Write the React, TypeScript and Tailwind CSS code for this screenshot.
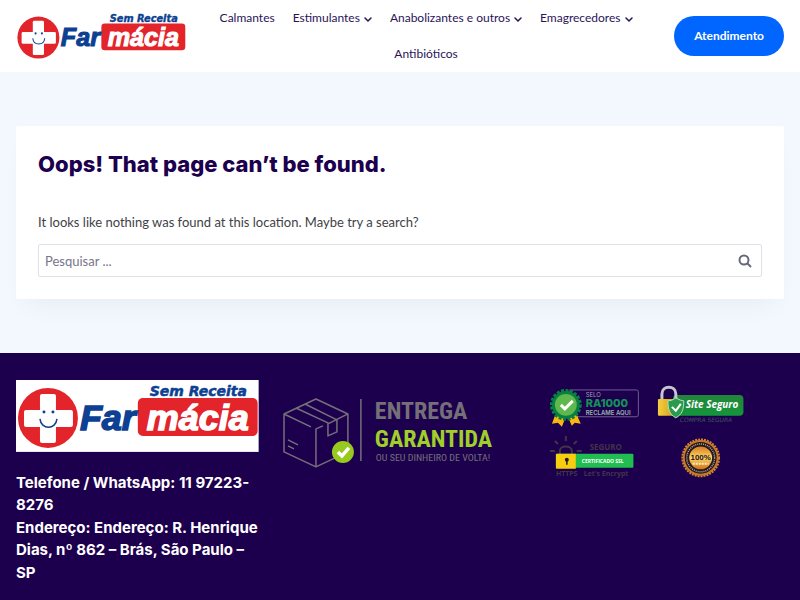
import React from "react";

function Logo({ className }: { className: string }) {
  return (
    <svg viewBox="0 0 243 72" className={className} role="img" aria-label="Farmácia Sem Receita">
      <rect width="243" height="72" fill="#fff" />
      <circle cx="32" cy="38" r="30" fill="#e3242b" />
      <rect x="24" y="14" width="16" height="49" rx="2" fill="#fff" />
      <rect x="8" y="30" width="49" height="17" rx="2" fill="#fff" />
      <circle cx="28" cy="32" r="1.5" fill="#0d3f92" />
      <circle cx="37" cy="32" r="1.5" fill="#0d3f92" />
      <path d="M24 39C25 50 40 50 41 39" fill="none" stroke="#0d3f92" strokeWidth="1.5" />
      <rect x="122" y="18" width="120" height="38" rx="5" fill="#e3242b" />
      <g fontFamily="Liberation Sans, Arial, sans-serif" fontWeight="700" fontStyle="italic" fontSize="36">
        <text x="64" y="50" fill="#0d3f92" stroke="#0d3f92" strokeWidth="1.5">Far</text>
        <text x="131" y="50" fill="#fff" stroke="#fff" strokeWidth="1.5">mácia</text>
      </g>
      <text x="134" y="16" fill="#0d3f92" stroke="#0d3f92" strokeWidth="0.5" fontFamily="DejaVu Sans, sans-serif" fontWeight="700" fontStyle="italic" fontSize="14">Sem Receita</text>
    </svg>
  );
}

function Delivery() {
  return (
    <svg viewBox="0 0 243 108" className="w-full" role="img" aria-label="Entrega garantida">
      <g fill="none" stroke="#757078" strokeWidth="1.5" strokeLinejoin="round">
        <path d="M32 47L5 34V72L37 87L69 72V34L37 19L5 34M37 87V49L44 46M69 34L49 44M17 28L49 43V56L58 52V40L26 24M9 60L19 65M9 66L15 69" />
        <path d="M82 19V81" />
      </g>
      <circle cx="64" cy="72" r="11" fill="#98c91e" />
      <path d="M59 72L63 76L70 68" fill="none" stroke="#fff" strokeWidth="3.5" />
      <g fontFamily="Liberation Sans Narrow, Roboto Condensed, Liberation Sans, sans-serif">
        <text x="96" y="39" fontSize="24" fontWeight="700" fill="#757078">ENTREGA</text>
        <text x="96" y="67" fontSize="24" fontWeight="700" fill="#a0cf29">GARANTIDA</text>
        <text x="97" y="81" fontSize="10" fill="#757078">OU SEU DINHEIRO DE VOLTA!</text>
      </g>
    </svg>
  );
}

function SeloRA() {
  return (
    <svg viewBox="0 0 108 54" className="w-full" role="img" aria-label="Selo RA1000">
      <rect x="28" y="10" width="70" height="27" rx="2" fill="none" stroke="#6f5c96" />
      <path d="M14 36L11 44L17 43L21 47L25 37ZM27 37L31 46L34 43L40 44L36 35Z" fill="#f9b810" />
      <circle cx="25" cy="25" r="14" fill="#087f43" />
      <circle cx="25" cy="25" r="14.5" fill="none" stroke="#087f43" strokeWidth="3" strokeDasharray="3 1.5" />
      <circle cx="25" cy="25" r="11" fill="#5fb84c" />
      <path d="M20 25L24 29L32 21" fill="none" stroke="#fff" strokeWidth="3" />
      <g fontFamily="Inter, sans-serif">
        <text x="45" y="17" fontSize="6" fill="#a99cbd">SELO</text>
        <text x="45" y="27" fontSize="11" fontWeight="800" fill="#16905a">RA1000</text>
        <text x="45" y="35" fontSize="6" fontWeight="600" fill="#9db0ad">RECLAME AQUI</text>
      </g>
    </svg>
  );
}

function SiteSeguro() {
  return (
    <svg viewBox="0 0 108 54" className="w-full" role="img" aria-label="Site Seguro">
      <defs>
        <linearGradient id="green" x1="0" y1="0" x2="0" y2="1">
          <stop stopColor="#23843c" />
          <stop offset="1" stopColor="#14963b" />
        </linearGradient>
        <linearGradient id="gold">
          <stop stopColor="#f5cf3f" />
          <stop offset="1" stopColor="#c98f12" />
        </linearGradient>
      </defs>
      <rect x="24" y="15" width="71" height="21" rx="4" fill="url(#green)" />
      <path d="M13 20V14C13 5 27 5 27 14V20" fill="none" stroke="#c6c5d1" strokeWidth="3" />
      <rect x="9" y="19" width="21" height="17" rx="1" fill="url(#gold)" />
      <path d="M27 18Q32 21 35 21C35 30 33 35 27 38C21 35 19 30 19 21Q23 21 27 18Z" fill="#2a9b4d" stroke="#b9dec0" />
      <path d="M23 27L27 31L32 24" fill="none" stroke="#fff" strokeWidth="2" />
      <text x="37" y="28" fill="#fff" fontFamily="Open Sans, sans-serif" fontSize="10" fontWeight="700" fontStyle="italic">Site Seguro</text>
      <text x="31" y="42" fill="#41515f" fontFamily="DejaVu Sans, sans-serif" fontSize="6" fontStyle="italic">COMPRA SEGURA</text>
    </svg>
  );
}

function CertificadoSSL() {
  return (
    <svg viewBox="0 0 108 54" className="w-full" role="img" aria-label="Certificado SSL">
      <g fill="none" stroke="#443448" strokeWidth="2">
        <path d="M19 23V17C19 11 31 11 31 17V23M25 2V7M14 7L17 10M36 7L33 10M9 17H14M36 17H41" />
      </g>
      <g fontFamily="Open Sans, sans-serif" fill="#42334b" fontWeight="700">
        <text x="49" y="16" fontSize="8">SEGURO</text>
        <text x="15" y="42" fontSize="7">HTTPS</text>
        <text x="43" y="42" fontSize="7">Let's Encrypt</text>
      </g>
      <rect x="15" y="20" width="78" height="14" rx="1" fill="#20bd51" />
      <path d="M16 20H35V35H16Q15 35 15 34V21Q15 20 16 20Z" fill="#f6ce0d" />
      <circle cx="26" cy="26" r="2" fill="#221936" />
      <path d="M26 26V31" stroke="#221936" strokeWidth="1.5" />
      <text x="41" y="29" fill="#fff" fontFamily="Open Sans, sans-serif" fontSize="5" fontWeight="700">CERTIFICADO SSL</text>
    </svg>
  );
}

function Quality() {
  return (
    <svg viewBox="0 0 108 54" className="w-full" role="img" aria-label="Qualidade 100%">
      <defs>
        <linearGradient id="seal" x1="0" y1="0" x2="0" y2="1">
          <stop stopColor="#d47d20" />
          <stop offset=".5" stopColor="#ffd56a" />
          <stop offset="1" stopColor="#cb721b" />
        </linearGradient>
      </defs>
      <circle cx="52" cy="24" r="18" fill="#c87924" />
      <circle cx="52" cy="24" r="18.5" fill="none" stroke="#ce8434" strokeWidth="2" strokeDasharray="2 1" />
      <circle cx="52" cy="24" r="16" fill="#24181d" />
      <circle cx="52" cy="24" r="14" fill="none" stroke="#bcafa5" strokeWidth="1.5" strokeDasharray="1 1" />
      <circle cx="52" cy="24" r="11.5" fill="url(#seal)" />
      <text x="52" y="26" textAnchor="middle" fill="#1c1515" fontFamily="Liberation Sans, sans-serif" fontSize="8" fontWeight="700">100%</text>
      <path d="M44 30H60" stroke="#fff2b0" strokeWidth="2" strokeDasharray="2 1" />
    </svg>
  );
}

const links = [
  { label: "Calmantes", menu: false },
  { label: "Estimulantes", menu: true },
  { label: "Anabolizantes e outros", menu: true },
  { label: "Emagrecedores", menu: true },
  { label: "Antibióticos", menu: false },
];

export default function App() {
  return (
    <div className="flex min-h-screen flex-col bg-[#f2f8fe] font-['Lato',sans-serif] text-[#3f3f46]">
      <header className="flex items-center bg-white px-4">
        <a href="#" className="shrink-0">
          <Logo className="w-[170px]" />
        </a>
        <nav className="flex flex-1 flex-wrap justify-center gap-x-0.5 pr-7 pl-5">
          {links.map((l) => (
            <a key={l.label} href="#" className="flex h-9 items-center gap-1 px-2 text-xs text-[#2a1458]">
              {l.label}
              {l.menu && (
                <svg viewBox="0 0 8 8" className="mt-1 size-2" aria-hidden="true">
                  <path d="M1 2L4 5L7 2" fill="none" stroke="currentColor" strokeWidth="1.5" strokeLinecap="round" />
                </svg>
              )}
            </a>
          ))}
        </nav>
        <button className="h-10 shrink-0 rounded-full bg-[#0066ff] px-5 text-xs font-bold text-white">Atendimento</button>
      </header>

      <main className="px-4 py-[54px]">
        <section className="rounded-xs bg-white px-[22px] pt-[22px] pb-[22px] shadow-[0_15px_25px_-10px_rgba(0,0,0,0.05)]">
          <h1 className="font-['Inter',sans-serif] text-[22px] leading-8 font-extrabold text-[#1c004e]">Oops! That page can’t be found.</h1>
          <p className="mt-8 text-[13px] leading-5">It looks like nothing was found at this location. Maybe try a search?</p>
          <form className="mt-3 flex h-[33px] items-center rounded-xs border border-[#dde2e8] pr-2" onSubmit={(e) => e.preventDefault()}>
            <input
              type="search"
              aria-label="Pesquisar"
              placeholder="Pesquisar ..."
              className="h-full min-w-0 flex-1 px-1.5 text-[13px] outline-none placeholder:text-[#77758c]"
            />
            <button type="submit" aria-label="Pesquisar" className="flex size-4 items-center justify-center text-[#68687d]">
              <svg viewBox="0 0 14 14" className="size-3.5" fill="none" stroke="currentColor" strokeWidth="2">
                <circle cx="6" cy="6" r="4.5" />
                <path d="M9 9L13 13" />
              </svg>
            </button>
          </form>
        </section>
      </main>

      <footer className="grid flex-1 grid-cols-3 items-start gap-5 bg-[#1c004e] px-4 pt-[27px]">
        <div>
          <Logo className="w-full" />
          <p className="mt-5 font-['Inter',sans-serif] text-[15px] leading-normal font-bold text-white">
            Telefone / WhatsApp: 11 97223-8276
            <br />
            Endereço: Endereço: R. Henrique Dias, nº 862 – Brás, São Paulo – SP
          </p>
        </div>
        <Delivery />
        <div className="grid grid-cols-2 pr-7">
          <SeloRA />
          <SiteSeguro />
          <CertificadoSSL />
          <Quality />
        </div>
      </footer>
    </div>
  );
}
